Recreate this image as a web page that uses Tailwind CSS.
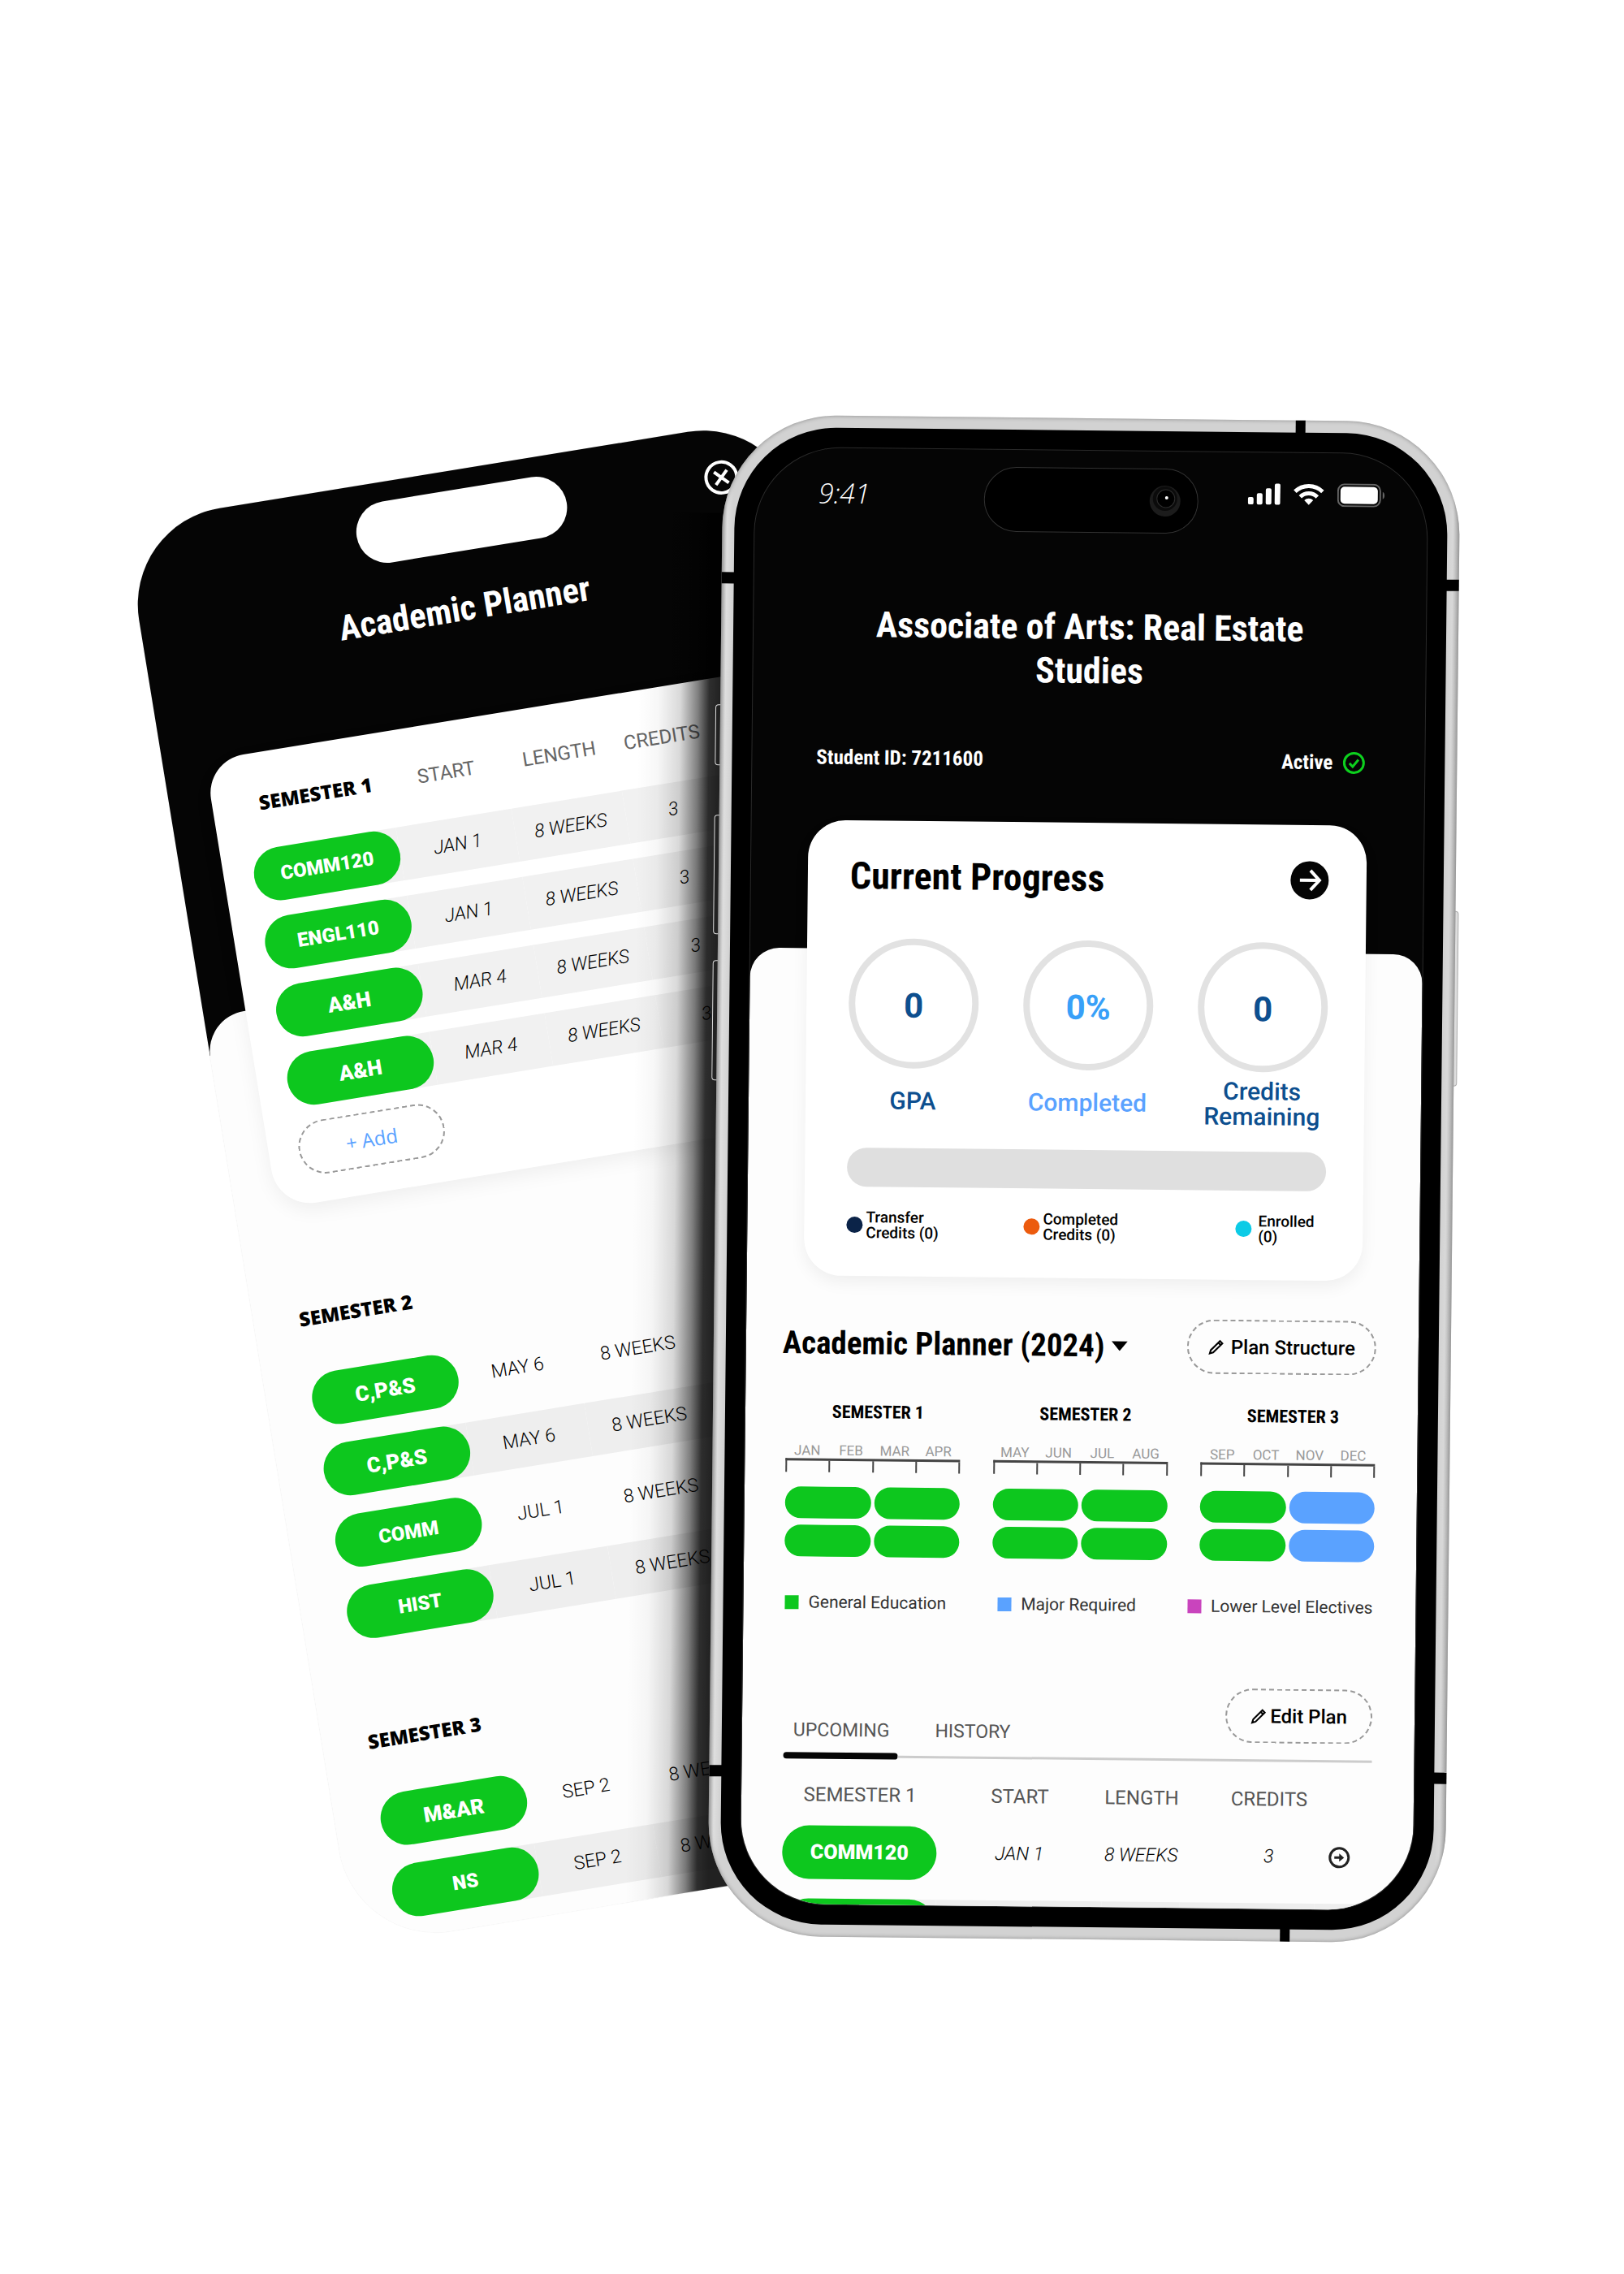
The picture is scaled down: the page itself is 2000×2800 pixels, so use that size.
<!DOCTYPE html>
<html lang="en">
<head>
    <meta charset="UTF-8">
    <meta name="viewport" content="width=device-width, initial-scale=1.0">
    <title>Academic Planner</title>
    <script src="https://cdn.jsdelivr.net/npm/@tailwindcss/browser@4"></script>
</head>
<body class="bg-white text-black font-['Roboto',sans-serif]">
<main class="flex items-start min-h-screen overflow-hidden pt-[515px] pl-[152px]">

    <!-- Back screen: planner list -->
    <section class="relative shrink-0 w-[824px] h-[1775px] mt-[130px] overflow-hidden rounded-[120px] bg-[linear-gradient(#050505_664px,#fdfdfd_664px)] origin-top-left -rotate-[9.25deg] shadow-[0_0_1px_#ccc]">
        <header class="h-[616px] pt-6 text-white">
            <div class="grid grid-cols-[1fr_262px_1fr] items-center">
                <div></div>
                <div class="h-[76px] rounded-full bg-white"></div>
                <button class="justify-self-end mr-[66px]" aria-label="Close">
                    <svg class="size-11" viewBox="0 0 44 44" fill="none" stroke="currentColor" stroke-width="4">
                        <circle cx="22" cy="22" r="19" />
                        <path d="M14 14 30 30M30 14 14 30" />
                    </svg>
                </button>
            </div>
            <h1 class="mt-10 pr-7 text-center text-[43px] leading-[60px] font-bold font-['Roboto_Condensed','Liberation_Sans_Narrow',sans-serif]">Academic Planner</h1>
        </header>

        <div class="h-[1159px] rounded-t-[50px] bg-[#fdfdfd]">
            <div class="flow-root">
                <!-- Semester 1 card -->
                <div class="-mt-[312px] mx-[52px] pt-[5px] pb-[33px] pl-[37px] rounded-[48px] bg-white shadow-[0_8px_24px_rgba(0,0,0,0.06)]">
                    <table class="w-full table-fixed border-separate border-spacing-x-0 border-spacing-y-[19px] -mb-[19px] text-center text-[24px] leading-[30px]">
                        <colgroup><col class="w-[182px]"><col class="w-[144px]"><col class="w-[138px]"><col class="w-[118px]"><col></colgroup>
                        <thead>
                            <tr class="h-[76px] text-[#666]">
                                <th class="font-extrabold text-black font-['Open_Sans',sans-serif]">SEMESTER 1</th>
                                <th class="font-normal">START</th>
                                <th class="font-normal">LENGTH</th>
                                <th class="font-normal">CREDITS</th>
                                <th></th>
                            </tr>
                        </thead>
                        <tbody class="text-[23px] font-light italic">
                            <tr>
                                <td class="bg-[linear-gradient(to_right,transparent_50%,#f1f1f1_50%)]"><button class="w-full h-[66px] rounded-full bg-[#0dc71e] text-white text-[24px] not-italic font-black">COMM120</button></td>
                                <td class="bg-[#f1f1f1]">JAN 1</td>
                                <td class="bg-[#f1f1f1]">8 WEEKS</td>
                                <td class="bg-[#f1f1f1]">3</td>
                                <td class="bg-[#f1f1f1]"></td>
                            </tr>
                            <tr>
                                <td class="bg-[linear-gradient(to_right,transparent_50%,#f1f1f1_50%)]"><button class="w-full h-[66px] rounded-full bg-[#0dc71e] text-white text-[24px] not-italic font-black">ENGL110</button></td>
                                <td class="bg-[#f1f1f1]">JAN 1</td>
                                <td class="bg-[#f1f1f1]">8 WEEKS</td>
                                <td class="bg-[#f1f1f1]">3</td>
                                <td class="bg-[#f1f1f1]"></td>
                            </tr>
                            <tr>
                                <td class="bg-[linear-gradient(to_right,transparent_50%,#f1f1f1_50%)]"><button class="w-full h-[66px] rounded-full bg-[#0dc71e] text-white text-[26px] not-italic font-black">A&amp;H</button></td>
                                <td class="bg-[#f1f1f1]">MAR 4</td>
                                <td class="bg-[#f1f1f1]">8 WEEKS</td>
                                <td class="bg-[#f1f1f1]">3</td>
                                <td class="bg-[#f1f1f1]"></td>
                            </tr>
                            <tr>
                                <td class="bg-[linear-gradient(to_right,transparent_50%,#f1f1f1_50%)]"><button class="w-full h-[66px] rounded-full bg-[#0dc71e] text-white text-[26px] not-italic font-black">A&amp;H</button></td>
                                <td class="bg-[#f1f1f1]">MAR 4</td>
                                <td class="bg-[#f1f1f1]">8 WEEKS</td>
                                <td class="bg-[#f1f1f1]">3</td>
                                <td class="bg-[#f1f1f1]"></td>
                            </tr>
                        </tbody>
                    </table>
                    <button class="mt-[19px] w-[182px] h-[67px] rounded-full border-2 border-dashed border-[#999] text-[#5aa2ff] text-[24px] font-['Open_Sans',sans-serif]">+ Add</button>
                </div>
            </div>

            <!-- Semester 2 -->
            <div class="mt-[124px] ml-[56px]">
                <h2 class="text-[24px] leading-[30px] font-extrabold font-['Open_Sans',sans-serif]">SEMESTER 2</h2>
                <table class="mt-[31px] w-full table-fixed border-separate border-spacing-x-0 border-spacing-y-[23px] text-center text-[23px] leading-[30px]">
                    <colgroup><col class="w-[182px]"><col class="w-[148px]"><col class="w-[152px]"><col></colgroup>
                    <tbody class="font-light">
                        <tr>
                            <td><button class="w-full h-[66px] rounded-full bg-[#0dc71e] text-white text-[26px] font-black">C,P&amp;S</button></td>
                            <td>MAY 6</td>
                            <td>8 WEEKS</td>
                            <td></td>
                        </tr>
                        <tr>
                            <td class="bg-[linear-gradient(to_right,transparent_50%,#eeeeee_50%)]"><button class="w-full h-[66px] rounded-full bg-[#0dc71e] text-white text-[26px] font-black">C,P&amp;S</button></td>
                            <td class="bg-[#eee]">MAY 6</td>
                            <td class="bg-[#eee]">8 WEEKS</td>
                            <td class="bg-[#eee]"></td>
                        </tr>
                        <tr>
                            <td><button class="w-full h-[66px] rounded-full bg-[#0dc71e] text-white text-[24px] font-black">COMM</button></td>
                            <td>JUL 1</td>
                            <td>8 WEEKS</td>
                            <td></td>
                        </tr>
                        <tr>
                            <td class="bg-[linear-gradient(to_right,transparent_50%,#eeeeee_50%)]"><button class="w-full h-[66px] rounded-full bg-[#0dc71e] text-white text-[24px] font-black">HIST</button></td>
                            <td class="bg-[#eee]">JUL 1</td>
                            <td class="bg-[#eee]">8 WEEKS</td>
                            <td class="bg-[#eee]"></td>
                        </tr>
                    </tbody>
                </table>
            </div>

            <!-- Semester 3 -->
            <div class="mt-[87px] ml-[56px]">
                <h2 class="text-[24px] leading-[30px] font-extrabold font-['Open_Sans',sans-serif]">SEMESTER 3</h2>
                <table class="mt-[29px] w-full table-fixed border-separate border-spacing-x-0 border-spacing-y-[23px] text-center text-[23px] leading-[30px]">
                    <colgroup><col class="w-[182px]"><col class="w-[148px]"><col class="w-[152px]"><col></colgroup>
                    <tbody class="font-light">
                        <tr>
                            <td><button class="w-full h-[66px] rounded-full bg-[#0dc71e] text-white text-[26px] font-black">M&amp;AR</button></td>
                            <td>SEP 2</td>
                            <td>8 WEEKS</td>
                            <td></td>
                        </tr>
                        <tr>
                            <td class="bg-[linear-gradient(to_right,transparent_50%,#eeeeee_50%)]"><button class="w-full h-[66px] rounded-full bg-[#0dc71e] text-white text-[24px] font-black">NS</button></td>
                            <td class="bg-[#eee]">SEP 2</td>
                            <td class="bg-[#eee]">8 WEEKS</td>
                            <td class="bg-[#eee]"></td>
                        </tr>
                    </tbody>
                </table>
            </div>
        </div>

        <!-- Shade cast by the front phone -->
        <div class="absolute left-[630px] top-[88px] w-[400px] h-[1950px] origin-top-left rotate-[9.85deg] bg-[linear-gradient(to_right,transparent_0px,rgba(0,0,0,0.03)_25px,rgba(0,0,0,0.15)_52px,rgba(0,0,0,0.5)_74px,rgba(0,0,0,0.82)_88px,rgba(0,0,0,0.87)_102px)]"></div>
    </section>

    <!-- Front phone -->
    <section class="relative shrink-0 -ml-[95px] w-[908px] rotate-[0.6deg]">
        <!-- side keys and antenna bands -->
        <div class="absolute -left-[6px] top-[357px] w-2 h-[75px] rounded-l-sm border border-[#ddd] bg-[#222]"></div>
        <div class="absolute -left-[6px] top-[493px] w-2 h-[147px] rounded-l-sm border border-[#ddd] bg-[#222]"></div>
        <div class="absolute -left-[6px] top-[672px] w-2 h-[148px] rounded-l-sm border border-[#ddd] bg-[#222]"></div>
        <div class="absolute -right-1 top-[602px] w-2 h-[216px] rounded-r-sm border border-[#aaa] bg-[#ddd]"></div>

        <div class="relative p-[15px] rounded-[140px] bg-[linear-gradient(to_right,#a8a8a8_0px,#dedede_6px,#d2d2d2_14px,#d2d2d2_894px,#d8d8d8_900px,#a8a8a8_908px)] shadow-[inset_0_0_5px_#888]">
            <div class="absolute left-0 top-[194px] w-4 h-[14px] bg-black"></div>
            <div class="absolute left-0 top-[1663px] w-4 h-[14px] bg-black"></div>
            <div class="absolute right-0 top-[194px] w-4 h-[14px] bg-black"></div>
            <div class="absolute right-0 top-[1663px] w-4 h-[14px] bg-black"></div>
            <div class="absolute left-[705px] top-0 w-3 h-4 bg-black"></div>
            <div class="absolute left-[705px] bottom-0 w-3 h-4 bg-black"></div>

            <div class="p-[25px] rounded-[125px] bg-black">
                <div class="h-[1793px] overflow-hidden rounded-[105px] bg-[#050505] shadow-[0_0_0_1px_#2a2a2a]">

                    <header class="h-[616px] pt-[21px] text-white">
                        <!-- Status bar -->
                        <div class="grid grid-cols-[1fr_264px_1fr] items-center">
                            <span class="pl-[78px] pb-3 text-[34px] leading-10 font-light italic font-['Open_Sans',sans-serif]">9:41</span>
                            <div class="flex h-[80px] items-center justify-end pr-[20px] rounded-full border border-[#333] bg-black">
                                <svg class="size-10" viewBox="0 0 40 40">
                                    <circle cx="20" cy="20" r="19" fill="#1c1c1c" />
                                    <circle cx="20" cy="17" r="15" fill="#0b0b0b" />
                                    <circle cx="21" cy="17" r="11" fill="#000" stroke="#2d2d2d" />
                                    <circle cx="22" cy="16" r="2" fill="#fff" />
                                </svg>
                            </div>
                            <div class="flex items-center justify-end gap-4 pr-[52px] pb-5">
                                <svg class="w-10 h-7" viewBox="0 0 40 28" fill="#fff">
                                    <rect x="0" y="18" width="7" height="9" rx="2" />
                                    <rect x="11" y="13" width="7" height="14" rx="2" />
                                    <rect x="22" y="7" width="7" height="20" rx="2" />
                                    <rect x="33" y="1" width="7" height="26" rx="2" />
                                </svg>
                                <svg class="w-[38px] h-7" viewBox="0 0 38 28" fill="none" stroke="#fff" stroke-width="5">
                                    <path d="M2 10.500a24.500 24.500 0 0 1 34 0" />
                                    <path d="M8.500 17a15 15 0 0 1 21 0" />
                                    <path d="M19 27l-5.500-5.800a8 8 0 0 1 11 0z" fill="#fff" stroke="none" />
                                </svg>
                                <svg class="w-[59px] h-[29px]" viewBox="0 0 59 29" fill="none">
                                    <rect x="1" y="1" width="52" height="27" rx="8" stroke="#666" stroke-width="2" />
                                    <rect x="4" y="4" width="46" height="21" rx="5" fill="#fff" />
                                    <path d="M56 10c3 1.500 3 7.500 0 9z" fill="#666" />
                                </svg>
                            </div>
                        </div>

                        <h1 class="mt-[89px] text-center text-[44px] leading-[54px] font-bold font-['Roboto_Condensed','Liberation_Sans_Narrow',sans-serif]">Associate of Arts: Real Estate<br>Studies</h1>
                        <div class="mt-[65px] flex items-center justify-between pl-[79px] pr-[73px] text-[25px] leading-9 font-bold font-['Roboto_Condensed','Liberation_Sans_Narrow',sans-serif]">
                            <p>Student ID: 7211600</p>
                            <p class="flex items-center gap-3">Active
                                <svg class="size-7" viewBox="0 0 28 28" fill="none" stroke="#0dd01e" stroke-width="3">
                                    <circle cx="14" cy="14" r="12" />
                                    <path d="M8.500 14.500 12.500 18.500 19.500 10" />
                                </svg>
                            </p>
                        </div>
                    </header>

                    <div class="rounded-t-[36px] bg-[#fdfdfd]">
                        <div class="flow-root">
                            <!-- Current progress card -->
                            <div class="-mt-[158px] mx-[70px] h-[561px] pt-[39px] pl-[52px] pr-[46px] rounded-[46px] bg-white shadow-[0_8px_20px_rgba(0,0,0,0.06)]">
                                <div class="flex items-center justify-between">
                                    <h2 class="text-[46px] leading-[58px] font-bold font-['Roboto_Condensed','Liberation_Sans_Narrow',sans-serif]">Current Progress</h2>
                                    <button aria-label="Open progress">
                                        <svg class="size-12" viewBox="0 0 48 48" fill="none" stroke="#fff" stroke-width="4">
                                            <circle cx="24" cy="24" r="23.500" fill="#050505" stroke="none" />
                                            <path d="M12 24h23M25 12l11 12-11 12" />
                                        </svg>
                                    </button>
                                </div>
                                <div class="mt-[48px] flex justify-between text-center text-[30px] leading-[31px] font-medium text-[#0d4f8f]">
                                    <div class="w-40">
                                        <div class="flex size-40 items-center justify-center rounded-full border-8 border-[#e2e2e2] pt-1 text-[42px] font-bold">0</div>
                                        <p class="mt-6">GPA</p>
                                    </div>
                                    <div class="w-40 text-[#5aa2ff]">
                                        <div class="flex size-40 items-center justify-center rounded-full border-8 border-[#e2e2e2] pt-1 text-[42px] font-bold text-[#38a0f8]">0%</div>
                                        <p class="mt-6">Completed</p>
                                    </div>
                                    <div class="w-40">
                                        <div class="flex size-40 items-center justify-center rounded-full border-8 border-[#e2e2e2] pt-1 text-[42px] font-bold">0</div>
                                        <p class="mt-2">Credits<br>Remaining</p>
                                    </div>
                                </div>
                                <div class="mt-[28px] h-12 rounded-full bg-[#dfdfdf]"></div>
                                <div class="mt-[28px] grid grid-cols-[218px_261px_1fr] text-[19px] leading-[19px] font-medium">
                                    <p class="flex items-center gap-1"><span class="size-5 rounded-full bg-[#0b2348]"></span><span>Transfer<br>Credits (0)</span></p>
                                    <p class="flex items-center gap-1"><span class="size-5 rounded-full bg-[#ec5b0e]"></span><span>Completed<br>Credits (0)</span></p>
                                    <p class="flex items-center gap-2"><span class="size-5 rounded-full bg-[#0ccbe6]"></span><span>Enrolled<br>(0)</span></p>
                                </div>
                            </div>
                        </div>

                        <!-- Year overview -->
                        <div class="mt-[49px] pl-[45px] pr-[52px] flex items-center justify-between">
                            <h2 class="flex items-center gap-2 text-[39px] leading-[50px] font-bold font-['Roboto_Condensed','Liberation_Sans_Narrow',sans-serif]">Academic Planner (2024)
                                <svg class="w-5 h-3" viewBox="0 0 20 12"><path d="M0 0h20L10 12z" /></svg>
                            </h2>
                            <button class="flex items-center justify-center gap-2 w-[233px] h-[67px] rounded-full border-2 border-dashed border-[#999] text-[24px] font-medium">
                                <svg class="size-5" viewBox="0 0 24 24" fill="none" stroke="currentColor" stroke-width="2.500"><path d="M2.500 21.500l1.500-5L17.500 3l3.500 3.500L7.500 20zM15 5.500l3.500 3.500" /></svg>
                                Plan Structure
                            </button>
                        </div>
                        <div class="mt-[37px] pl-[50px] pr-[52px] flex justify-between text-center">
                            <div class="w-[215px]">
                                <h3 class="pl-3 text-[22px] leading-[30px] font-bold font-['Roboto_Condensed','Liberation_Sans_Narrow',sans-serif]">SEMESTER 1</h3>
                                <div class="mt-[22px] grid grid-cols-4 text-[17px] leading-5 text-[#999]"><span>JAN</span><span>FEB</span><span>MAR</span><span>APR</span></div>
                                <div class="grid grid-cols-4 h-[17px] border-t-3 border-l-2 border-[#444]"><i class="border-r-2 border-[#444]"></i><i class="border-r-2 border-[#444]"></i><i class="border-r-2 border-[#444]"></i><i class="border-r-2 border-[#444]"></i></div>
                                <div class="mt-[18px] grid grid-cols-2 gap-x-1 gap-y-2">
                                    <div class="h-[39px] rounded-full bg-[#0dc71e]"></div><div class="h-[39px] rounded-full bg-[#0dc71e]"></div>
                                    <div class="h-[39px] rounded-full bg-[#0dc71e]"></div><div class="h-[39px] rounded-full bg-[#0dc71e]"></div>
                                </div>
                            </div>
                            <div class="w-[215px]">
                                <h3 class="pl-3 text-[22px] leading-[30px] font-bold font-['Roboto_Condensed','Liberation_Sans_Narrow',sans-serif]">SEMESTER 2</h3>
                                <div class="mt-[22px] grid grid-cols-4 text-[17px] leading-5 text-[#999]"><span>MAY</span><span>JUN</span><span>JUL</span><span>AUG</span></div>
                                <div class="grid grid-cols-4 h-[17px] border-t-3 border-l-2 border-[#444]"><i class="border-r-2 border-[#444]"></i><i class="border-r-2 border-[#444]"></i><i class="border-r-2 border-[#444]"></i><i class="border-r-2 border-[#444]"></i></div>
                                <div class="mt-[18px] grid grid-cols-2 gap-x-1 gap-y-2">
                                    <div class="h-[39px] rounded-full bg-[#0dc71e]"></div><div class="h-[39px] rounded-full bg-[#0dc71e]"></div>
                                    <div class="h-[39px] rounded-full bg-[#0dc71e]"></div><div class="h-[39px] rounded-full bg-[#0dc71e]"></div>
                                </div>
                            </div>
                            <div class="w-[215px]">
                                <h3 class="pl-3 text-[22px] leading-[30px] font-bold font-['Roboto_Condensed','Liberation_Sans_Narrow',sans-serif]">SEMESTER 3</h3>
                                <div class="mt-[22px] grid grid-cols-4 text-[17px] leading-5 text-[#999]"><span>SEP</span><span>OCT</span><span>NOV</span><span>DEC</span></div>
                                <div class="grid grid-cols-4 h-[17px] border-t-3 border-l-2 border-[#444]"><i class="border-r-2 border-[#444]"></i><i class="border-r-2 border-[#444]"></i><i class="border-r-2 border-[#444]"></i><i class="border-r-2 border-[#444]"></i></div>
                                <div class="mt-[18px] grid grid-cols-2 gap-x-1 gap-y-2">
                                    <div class="h-[39px] rounded-full bg-[#0dc71e]"></div><div class="h-[39px] rounded-full bg-[#5aa2ff]"></div>
                                    <div class="h-[39px] rounded-full bg-[#0dc71e]"></div><div class="h-[39px] rounded-full bg-[#5aa2ff]"></div>
                                </div>
                            </div>
                        </div>
                        <div class="mt-[44px] pl-[51px] pr-[53px] flex justify-between text-[21px] leading-6 text-[#333]">
                            <p class="flex items-center gap-3"><span class="size-[17px] bg-[#0dc71e]"></span>General Education</p>
                            <p class="flex items-center gap-3"><span class="size-[17px] bg-[#5aa2ff]"></span>Major Required</p>
                            <p class="flex items-center gap-3"><span class="size-[17px] bg-[#c944bd]"></span>Lower Level Electives</p>
                        </div>

                        <!-- Plan table -->
                        <div class="mt-[89px] pl-[51px] pr-[52px]">
                            <div class="flex h-[84px] items-end justify-between">
                                <div class="flex gap-[56px] pl-3 pb-3 text-[23px] leading-[30px] text-[#555]">
                                    <button>UPCOMING</button>
                                    <button>HISTORY</button>
                                </div>
                                <button class="self-start flex items-center justify-center gap-1 w-[181px] h-[67px] rounded-full border-2 border-dashed border-[#999] text-[24px] font-medium">
                                    <svg class="size-5" viewBox="0 0 24 24" fill="none" stroke="currentColor" stroke-width="2.500"><path d="M2.500 21.500l1.500-5L17.500 3l3.500 3.500L7.500 20zM15 5.500l3.500 3.500" /></svg>
                                    Edit Plan
                                </button>
                            </div>
                            <div class="flex items-center">
                                <div class="w-[141px] h-2 rounded-full bg-[#050505]"></div>
                                <div class="flex-1 h-[3px] bg-[#ccc]"></div>
                            </div>
                            <table class="mt-[6px] w-full table-fixed border-separate border-spacing-x-0 border-spacing-y-[24px] text-center text-[24px] leading-7">
                                <colgroup><col class="w-[190px]"><col class="w-[204px]"><col class="w-[96px]"><col class="w-[166px]"><col></colgroup>
                                <thead>
                                    <tr class="text-[#555]">
                                        <th class="font-normal">SEMESTER 1</th>
                                        <th class="font-normal">START</th>
                                        <th class="font-normal">LENGTH</th>
                                        <th class="font-normal pl-[52px]">CREDITS</th>
                                        <th></th>
                                    </tr>
                                </thead>
                                <tbody class="text-[23px] font-light italic">
                                    <tr>
                                        <td><button class="w-full h-[66px] rounded-full bg-[#0dc71e] text-white text-[25px] not-italic font-black">COMM120</button></td>
                                        <td>JAN 1</td>
                                        <td class="whitespace-nowrap">8 WEEKS</td>
                                        <td class="pl-[52px]">3</td>
                                        <td class="pr-[10px]">
                                            <button class="block mx-auto" aria-label="Open course">
                                                <svg class="size-7" viewBox="0 0 28 28" fill="none" stroke="#222" stroke-width="3">
                                                    <circle cx="14" cy="14" r="11.500" />
                                                    <path d="M8 14h8" /><path d="M14 9l6 5-6 5z" fill="#222" stroke="none" />
                                                </svg>
                                            </button>
                                        </td>
                                    </tr>
                                    <tr>
                                        <td class="bg-[linear-gradient(to_right,transparent_50%,#eeeeee_50%)]"><button class="w-full h-[66px] rounded-full bg-[#0dc71e]" aria-label="ENGL110"></button></td>
                                        <td class="bg-[#eee]"></td>
                                        <td class="bg-[#eee]"></td>
                                        <td class="bg-[#eee]"></td>
                                        <td class="bg-[#eee]"></td>
                                    </tr>
                                </tbody>
                            </table>
                        </div>
                    </div>
                </div>
            </div>
        </div>
    </section>
</main>
</body>
</html>
